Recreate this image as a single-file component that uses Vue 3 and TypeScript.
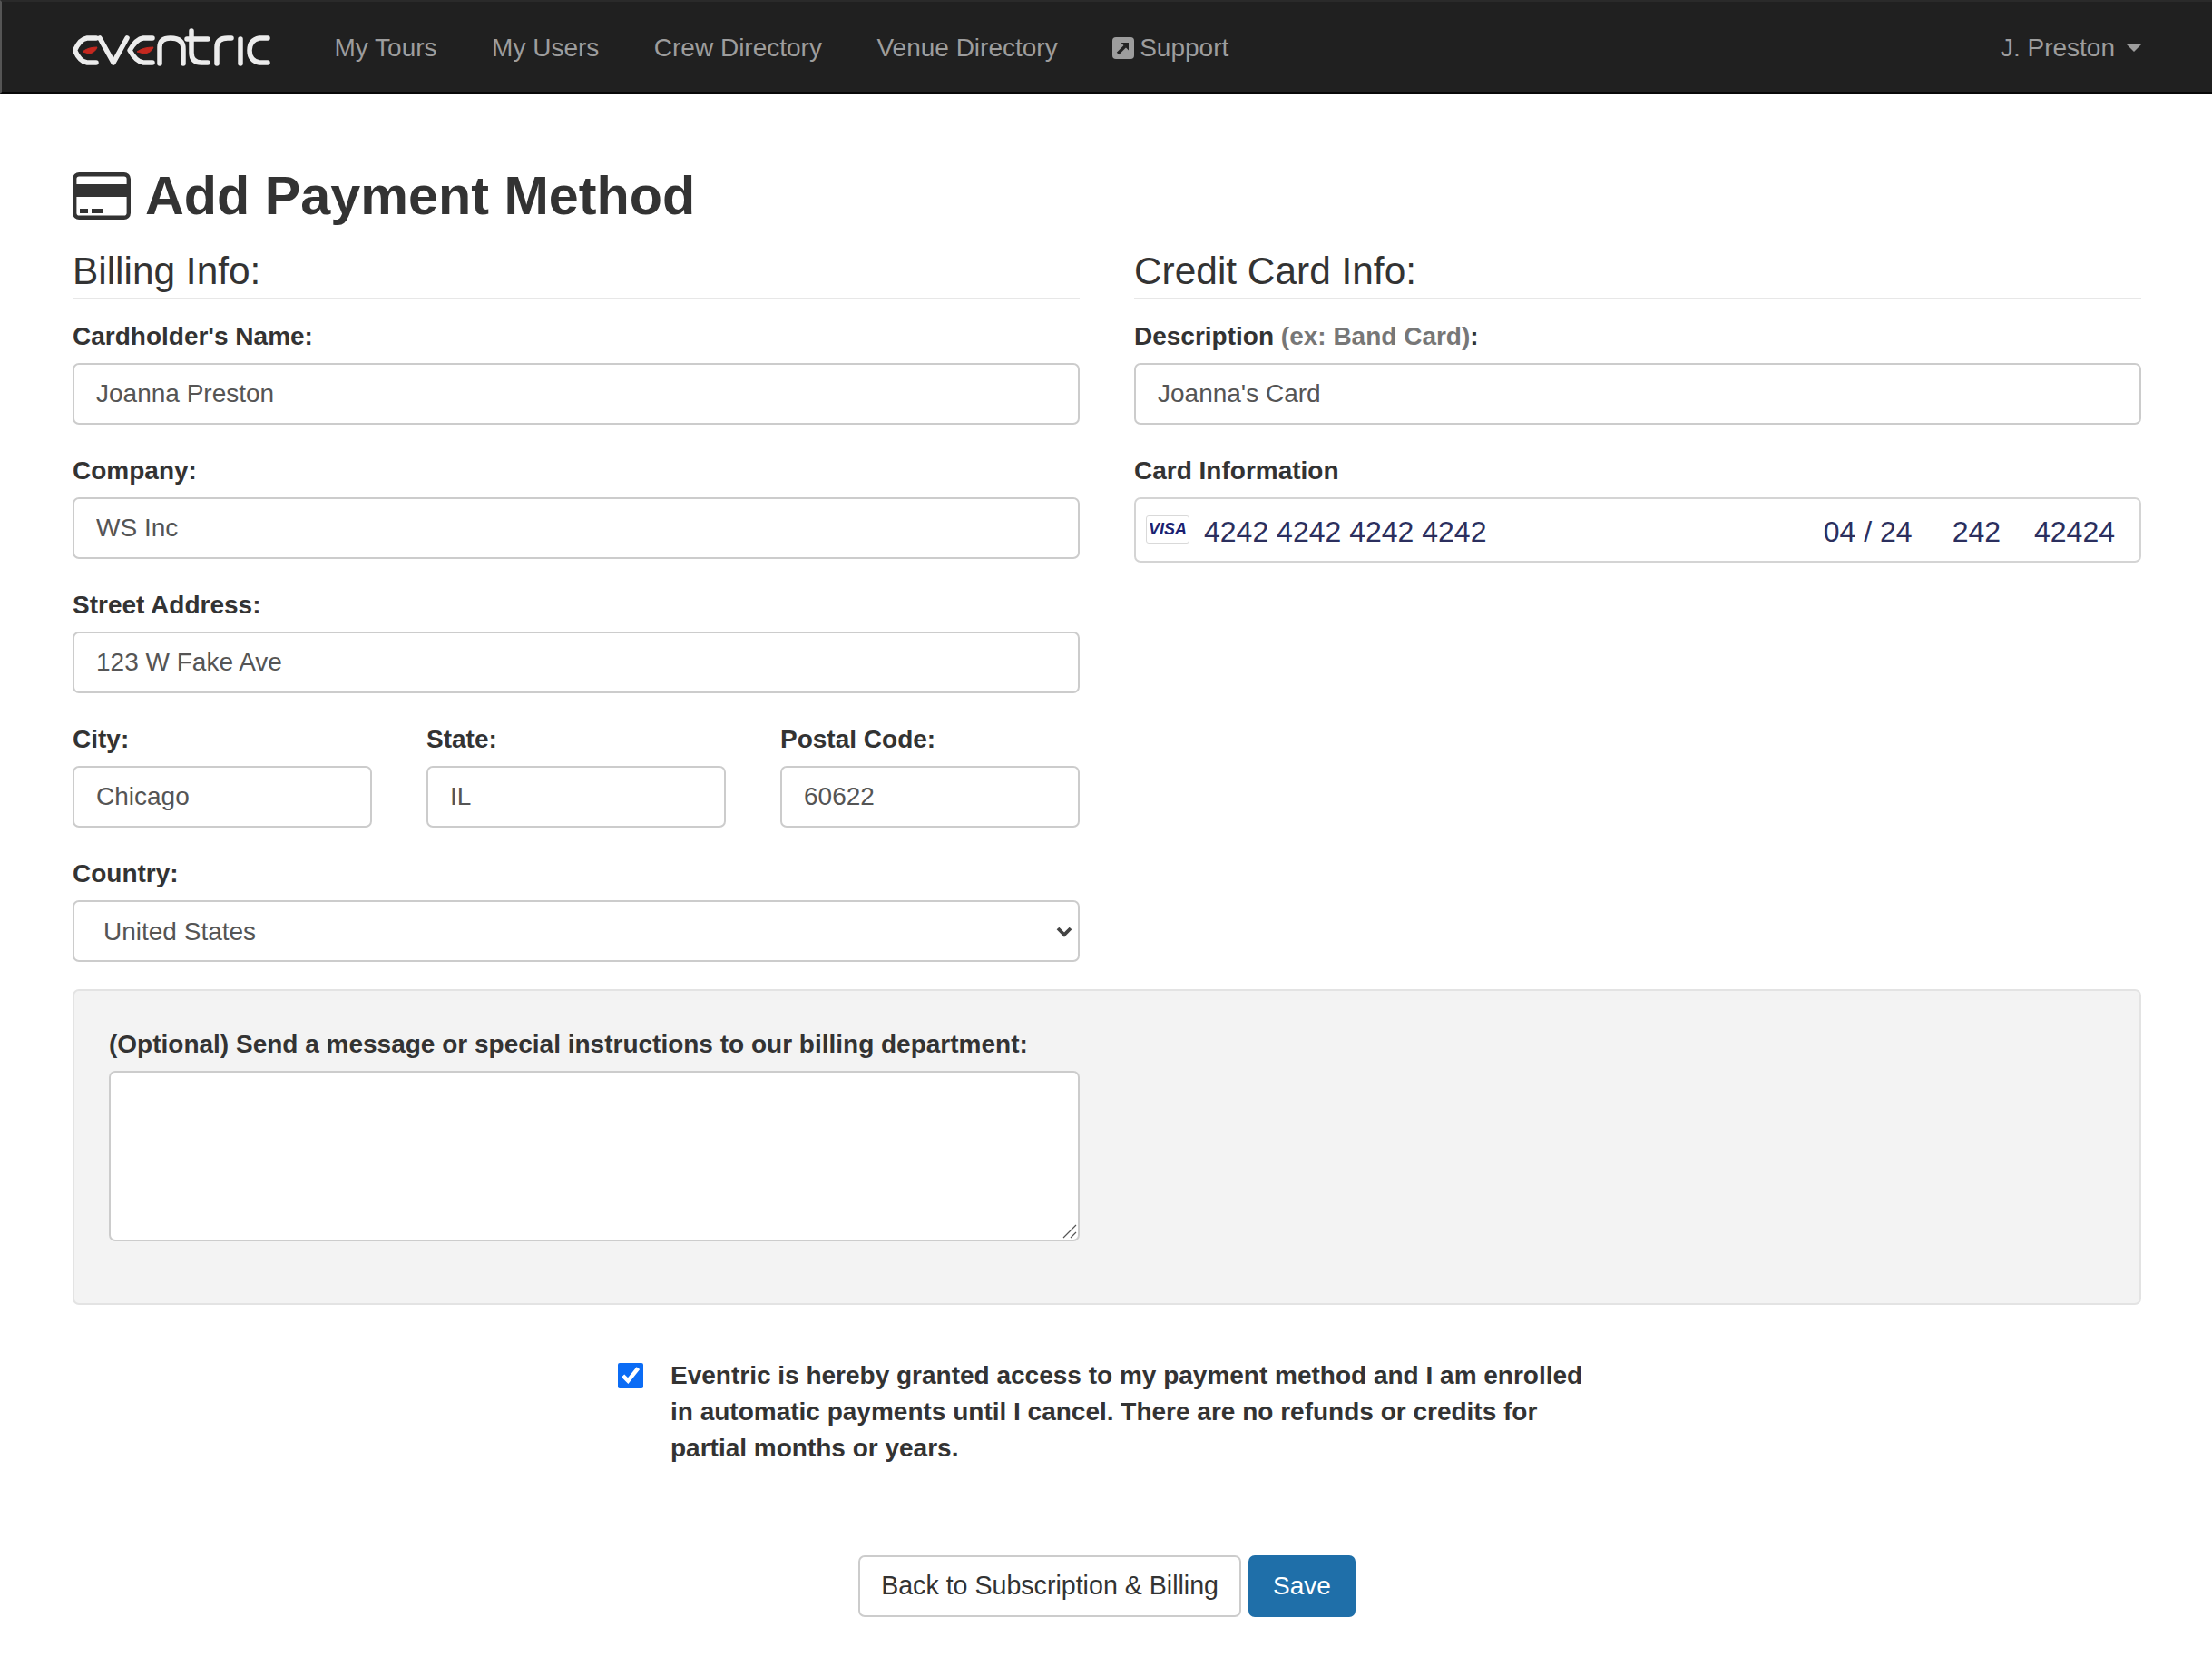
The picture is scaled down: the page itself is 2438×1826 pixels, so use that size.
<script setup lang="ts">
const navLinks: string[] = ['My Tours', 'My Users', 'Crew Directory', 'Venue Directory']
const left = {
  name: 'Joanna Preston',
  company: 'WS Inc',
  street: '123 W Fake Ave',
  city: 'Chicago',
  state: 'IL',
  zip: '60622',
}
</script>

<template>
  <div class="page">
    <nav class="navbar">
      <svg class="logo" viewBox="0 0 220 44" fill="none" aria-label="eventric">
        <g stroke="#ececec" stroke-width="5.500" stroke-linecap="round" stroke-linejoin="round">
          <path d="M26 12 H16 Q8 13 2.500 25.500 Q8 38 16 39 H26" />
          <path d="M30 12 L45 39 L60 12" />
          <path d="M88 12 H78 Q70 13 63 25.500 Q70 38 78 39 H88" />
          <path d="M96 40 V22 Q96 12 108 12 Q122 12 122 24 V40" />
          <path d="M131 4 V28 Q131 39 142 39 H149" />
          <path d="M126 13 H149" />
          <path d="M159 40 V22 Q159 12 171 12 H175" />
          <path d="M185 13 V40" />
          <path d="M215 12 H206 Q195 14 195 25.500 Q195 37 206 39 H215" />
        </g>
        <path d="M11 27 Q17 22 27 22 Q25 28 18 29 Z" fill="#c4281f" stroke="#c4281f" stroke-width="1" />
        <path d="M71 27 Q78 22 89 22 Q87 28 79 29 Z" fill="#c4281f" stroke="#c4281f" stroke-width="1" />
      </svg>
      <a v-for="link in navLinks" :key="link" class="nav-link" href="#">{{ link }}</a>
      <a class="nav-link" href="#">
        <svg class="ext" viewBox="0 0 24 24">
          <rect width="24" height="24" rx="4" fill="#9d9d9d" />
          <path d="M6 18 L14 10" stroke="#222" stroke-width="3.400" />
          <path d="M9.500 6 H18 V14.500 Z" fill="#222" />
        </svg>Support
      </a>
      <a class="nav-link user" href="#">J. Preston<span class="caret"></span></a>
    </nav>

    <main class="main">
      <h1 class="title">
        <svg class="card-icon" viewBox="0 0 64 52">
          <rect x="2.200" y="2.200" width="59.600" height="47.600" rx="5" fill="#fff" stroke="#333" stroke-width="4.400" />
          <rect x="2" y="13" width="60" height="14" fill="#333" />
          <rect x="8" y="40" width="9" height="5" fill="#333" />
          <rect x="21" y="40" width="13" height="5" fill="#333" />
        </svg>
        Add Payment Method
      </h1>

      <div class="columns">
        <section>
          <h2 class="section-title">Billing Info:</h2>
          <label class="field">
            <span class="label">Cardholder's Name:</span>
            <input class="control" :value="left.name" />
          </label>
          <label class="field">
            <span class="label">Company:</span>
            <input class="control" :value="left.company" />
          </label>
          <label class="field">
            <span class="label">Street Address:</span>
            <input class="control" :value="left.street" />
          </label>
          <div class="triple">
            <label class="field">
              <span class="label">City:</span>
              <input class="control" :value="left.city" />
            </label>
            <label class="field">
              <span class="label">State:</span>
              <input class="control" :value="left.state" />
            </label>
            <label class="field">
              <span class="label">Postal Code:</span>
              <input class="control" :value="left.zip" />
            </label>
          </div>
          <label class="field last">
            <span class="label">Country:</span>
            <span class="select-wrap">
              <select class="control select">
                <option>United States</option>
              </select>
              <svg class="chevron" viewBox="0 0 18 13">
                <path d="M2 3 L9 10 L16 3" fill="none" stroke="#444" stroke-width="3.800" />
              </svg>
            </span>
          </label>
        </section>

        <section>
          <h2 class="section-title">Credit Card Info:</h2>
          <label class="field">
            <span class="label">Description <span class="muted">(ex: Band Card)</span>:</span>
            <input class="control" value="Joanna's Card" />
          </label>
          <div class="field">
            <span class="label">Card Information</span>
            <div class="stripe">
              <span class="visa"><span class="visa-text">VISA</span></span>
              <span class="stripe-num">4242 4242 4242 4242</span>
              <span>04 / 24</span>
              <span class="cvc">242</span>
              <span class="zip">42424</span>
            </div>
          </div>
        </section>
      </div>

      <div class="well">
        <label class="label well-label" for="msg">(Optional) Send a message or special instructions to our billing department:</label>
        <div class="area-wrap">
          <textarea id="msg" class="control area"></textarea>
          <svg class="grip" viewBox="0 0 16 16">
            <path d="M1 15 L15 1 M9 15 L15 9" stroke="#555" stroke-width="1.200" fill="none" />
          </svg>
        </div>
      </div>

      <div class="consent">
        <input class="check" type="checkbox" checked />
        <p class="consent-text">Eventric is hereby granted access to my payment method and I am enrolled in automatic payments until I cancel. There are no refunds or credits for partial months or years.</p>
      </div>

      <div class="actions">
        <button class="btn back">Back to Subscription &amp; Billing</button>
        <button class="btn primary">Save</button>
      </div>
    </main>
  </div>
</template>

<style>
html, body { margin: 0; background: #fff; }
</style>

<style scoped>
.page {
  width: 2438px;
  min-height: 1826px;
  font-family: "Liberation Sans", Arial, sans-serif;
  font-size: 28px;
  color: #333;
  box-sizing: border-box;
}
.navbar {
  height: 104px;
  box-sizing: border-box;
  background: #202020;
  border-top: 2px solid #2a2a2a;
  border-bottom: 3px solid #080808;
  border-left: 2px solid #555;
  display: flex;
  align-items: center;
  padding: 2px 78px 0 78px;
  gap: 60.500px;
}
.logo { width: 220px; height: 44px; margin: -2px 8px 0 0; }
.nav-link { color: #9d9d9d; text-decoration: none; display: flex; align-items: center; }
.ext { width: 24px; height: 24px; margin-right: 6px; }
.user { margin-left: auto; }
.caret {
  width: 0; height: 0; margin-left: 13px;
  border-left: 8px solid transparent;
  border-right: 8px solid transparent;
  border-top: 8px solid #9d9d9d;
}
.main { padding: 0 78px 0 80px; }
.title {
  margin: 0;
  padding-top: 76px;
  font-size: 59.300px;
  line-height: 72px;
  font-weight: 700;
  display: flex;
  align-items: center;
  color: #333;
}
.card-icon { width: 64px; height: 52px; margin-right: 16px; }
.columns { display: grid; grid-template-columns: 1fr 1fr; gap: 60px; }
.section-title {
  margin: 21.500px 0 22px;
  font-size: 42.400px;
  line-height: 50px;
  font-weight: 400;
  padding-bottom: 4.500px;
  border-bottom: 2px solid #e7e7e7;
}
.field { display: block; margin-bottom: 32px; }
.field.last { margin-bottom: 30px; }
.label { display: block; font-weight: 700; line-height: 38px; margin-bottom: 10px; }
.muted { display: inline; color: #777; }
.control {
  display: block;
  width: 100%;
  height: 68px;
  box-sizing: border-box;
  border: 2px solid #ccc;
  border-radius: 7px;
  padding: 0 24px;
  font: inherit;
  color: #555;
  background: #fff;
  outline: none;
}
.triple { display: grid; grid-template-columns: repeat(3, 1fr); gap: 60px; }
.select-wrap { position: relative; display: block; }
.select { appearance: none; padding-left: 32px; }
.chevron { position: absolute; right: 8px; top: 28px; width: 18px; height: 13px; }
.stripe {
  height: 72px;
  box-sizing: border-box;
  border: 2px solid #d4d4d4;
  border-radius: 7px;
  display: flex;
  align-items: center;
  padding: 4px 27px 0 11px;
  font-size: 32px;
  color: #2b2f5e;
}
.visa {
  width: 48px;
  height: 31px;
  box-sizing: border-box;
  border: 1px solid #d9d9d9;
  border-radius: 3px;
  margin: -5px 16px 0 0;
  display: flex;
  align-items: center;
  justify-content: center;
}
.visa-text { font-size: 18px; font-weight: 700; font-style: italic; color: #1a1f71; }
.stripe-num { flex: 1; }
.cvc { margin-left: 44px; }
.zip { margin-left: 37px; }
.well {
  box-sizing: border-box;
  height: 348px;
  background: #f3f3f3;
  border: 2px solid #e3e3e3;
  border-radius: 7px;
  padding: 40px 38px 0;
}
.well-label { margin-bottom: 10px; }
.area-wrap { position: relative; width: calc(50% - 30px); }
.area { height: 188px; resize: none; padding: 12px 24px; }
.grip { position: absolute; right: 3px; bottom: 3px; width: 16px; height: 16px; }
.consent {
  width: 1088px;
  margin: 57.500px 0 0 601px;
  display: flex;
  gap: 30px;
}
.check { width: 28px; height: 28px; margin: 6px 0 0; accent-color: #0b6cf5; flex: none; }
.consent-text { margin: 0; width: 1030px; font-weight: 700; line-height: 40px; }
.actions { display: flex; justify-content: center; gap: 8px; margin-top: 98px; }
.btn {
  height: 68px;
  box-sizing: border-box;
  border: 2px solid #ccc;
  border-radius: 7px;
  background: #fff;
  padding: 0 25px;
  font: inherit;
  color: #333;
}
.btn.back { font-size: 28.600px; padding: 0 23px; }
.btn.primary { background: #1f6fa9; border-color: #1f6fa9; color: #fff; }
</style>
